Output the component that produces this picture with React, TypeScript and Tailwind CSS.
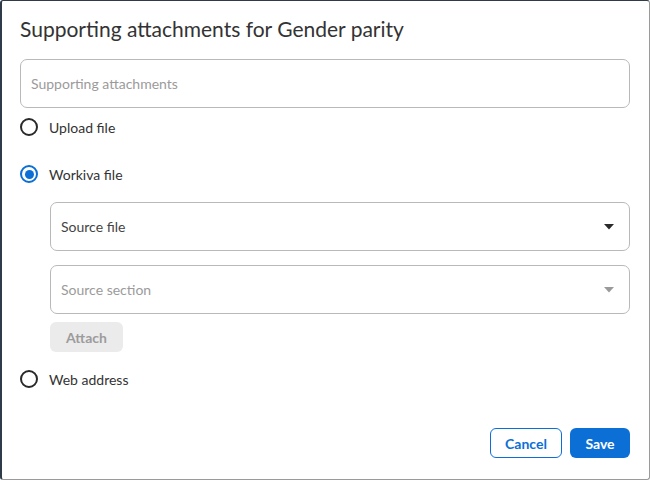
import React from "react";

function Radio({ checked, label }: { checked?: boolean; label: string }) {
  return (
    <label className="flex h-[18px] items-center gap-[11px]">
      {checked ? (
        <span className="flex h-[18px] w-[18px] items-center justify-center rounded-full border-2 border-[#0b6fd6]">
          <span className="h-[9px] w-[9px] rounded-full bg-[#0b6fd6]" />
        </span>
      ) : (
        <span className="h-[18px] w-[18px] rounded-full border-2 border-[#2a2a2a]" />
      )}
      <span className="text-[14px] text-[#333]">{label}</span>
    </label>
  );
}

function Select({ label, muted }: { label: string; muted?: boolean }) {
  return (
    <div className="flex h-[49px] items-center justify-between rounded-[7px] border border-[#b9b9b9] pl-[10px] pr-[15px]">
      <span className={`text-[14px] ${muted ? "text-[#9b9b9b]" : "text-[#444]"}`}>{label}</span>
      <svg width="10" height="6" viewBox="0 0 10 6">
        <path d="M0 0h10L5 5.5z" fill={muted ? "#9a9a9a" : "#2a2a2a"} />
      </svg>
    </div>
  );
}

export default function App() {
  return (
    <div
      className="h-[480px] w-[650px] overflow-hidden rounded-[3px] border-t border-l-2 border-r border-b border-t-[#2f3b49] border-l-[#2f3b49] border-r-[#9a9a9a] border-b-[#9a9a9a] bg-white"
      style={{ fontFamily: "Lato, 'Noto Sans', sans-serif" }}
    >
      <div className="flex h-full flex-col pl-[18px] pr-[19px] pt-[14px] pb-[21px]">
        <h1 className="text-[21px] leading-[28px] text-[#333]">
          Supporting attachments for Gender parity
        </h1>

        <div className="mt-[16px] flex h-[49px] items-center rounded-[7px] border border-[#b9b9b9] px-[10px]">
          <span className="text-[14px] text-[#9b9b9b]">Supporting attachments</span>
        </div>

        <div className="mt-[10px]">
          <Radio label="Upload file" />
        </div>
        <div className="mt-[29px]">
          <Radio checked label="Workiva file" />
        </div>

        <div className="ml-[30px] mt-[19px] flex flex-col">
          <Select label="Source file" />
          <div className="mt-[14px]">
            <Select label="Source section" muted />
          </div>
          <div className="mt-[8px]">
            <button className="h-[30px] w-[73px] rounded-[6px] bg-[#ebebeb] text-[14px] font-bold text-[#9c9c9c]">
              Attach
            </button>
          </div>
        </div>

        <div className="mt-[18px]">
          <Radio label="Web address" />
        </div>

        <div className="mt-auto flex justify-end gap-[8px]">
          <button className="h-[30px] w-[72px] rounded-[6px] border border-[#0b6fd6] text-[14px] font-bold text-[#0b6fd6]">
            Cancel
          </button>
          <button className="h-[30px] w-[60px] rounded-[6px] bg-[#0b6fd6] text-[14px] font-bold text-white">
            Save
          </button>
        </div>
      </div>
    </div>
  );
}
